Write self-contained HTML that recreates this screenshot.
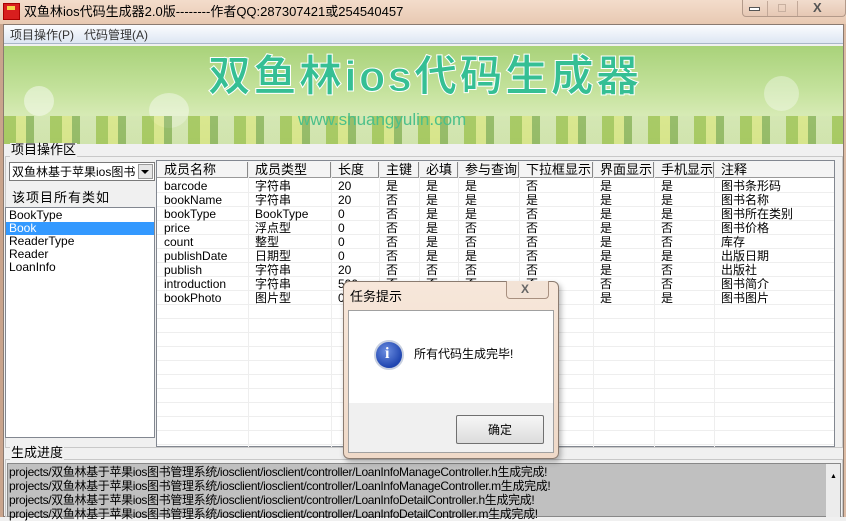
<!DOCTYPE html>
<html><head><meta charset="utf-8"><style>
*{margin:0;padding:0;box-sizing:border-box}
body{width:846px;height:517px;overflow:hidden;position:relative;background:#f0f0f0;font-family:"Liberation Sans","Noto Sans CJK SC",sans-serif;font-size:12px;color:#000}
.a{position:absolute}
.t{position:absolute;white-space:nowrap;line-height:14px;font-size:12px}
</style></head><body>
<div class="a" style="left:0;top:0;width:846px;height:517px;background:linear-gradient(90deg,#c9a48c,#e9cdb6 20%,#f0d8c4 50%,#e8cdb8 80%,#dcbba4)"></div>
<div class="a" style="left:0;top:0;width:846px;height:24px;background:linear-gradient(#f3dccb,#e8c9b2)"></div>
<div class="a" style="left:3px;top:3px;width:17px;height:17px;background:#d81e1e;border:1px solid #a00"></div>
<div class="a" style="left:7px;top:6px;width:8px;height:4px;background:#f6d24a"></div>
<div class="t" style="left:24px;top:4px;font-size:13px;line-height:15px">双鱼林ios代码生成器2.0版--------作者QQ:287307421或254540457</div>
<div class="a" style="left:742px;top:0;width:104px;height:17px;border:1px solid #b39a8a;border-top:none;border-radius:0 0 4px 4px;background:linear-gradient(#f1dccd,#e6c8b4)"></div>
<div class="a" style="left:767px;top:1px;width:1px;height:15px;background:#c2a898"></div>
<div class="a" style="left:797px;top:1px;width:1px;height:15px;background:#c2a898"></div>
<div class="a" style="left:749px;top:7px;width:11px;height:4px;border:1px solid #555;background:#fff"></div>
<div class="a" style="left:778px;top:4px;width:8px;height:8px;border:1px solid #c8b0a0"></div>
<div class="t" style="left:813px;top:1px;font-size:13px;color:#555;font-weight:bold">X</div>
<div class="a" style="left:3px;top:24px;width:841px;height:493px;background:#f0f0f0;border:1px solid #8a7a70"></div>
<div class="a" style="left:4px;top:25px;width:839px;height:19px;background:linear-gradient(#fbfcfe,#dde6f3);border-bottom:1px solid #a9b7c9"></div>
<div class="t" style="left:10px;top:28px;color:#333">项目操作(P)&nbsp;&nbsp;&nbsp;代码管理(A)</div>
<div class="a" style="left:4px;top:46px;width:839px;height:98px;background:linear-gradient(#a9d27a,#c4e29c 45%,#d6eab4 70%,#cfe3a8);overflow:hidden">
 <div class="a" style="left:20px;top:40px;width:30px;height:30px;border-radius:50%;background:rgba(255,255,255,.45)"></div>
 <div class="a" style="left:145px;top:47px;width:40px;height:35px;border-radius:50%;background:rgba(255,255,255,.4)"></div>
 <div class="a" style="left:760px;top:30px;width:35px;height:35px;border-radius:50%;background:rgba(255,255,255,.35)"></div>
 <div class="a" style="left:0;top:70px;width:839px;height:28px;background:repeating-linear-gradient(90deg,rgba(150,190,70,.7) 0 12px,rgba(220,230,120,.6) 12px 22px,rgba(110,160,60,.6) 22px 30px,rgba(210,228,180,.4) 30px 46px)"></div>
</div>
<div class="t" style="left:208px;top:52px;font-size:43px;line-height:50px;font-weight:bold;color:#35bf94;-webkit-text-stroke:1px #fff;letter-spacing:2.5px">双鱼林ios代码生成器</div>
<div class="t" style="left:298px;top:110px;font-size:17px;line-height:20px;color:#4cc08a">www.shuangyulin.com</div>
<div class="a" style="left:5px;top:156px;width:838px;height:292px;border:1px solid #c8c8c8"></div>
<div class="t" style="left:10px;top:143px;background:#f0f0f0;font-size:13px;padding:0 1px">项目操作区</div>
<div class="a" style="left:9px;top:162px;width:146px;height:19px;border:1px solid #7a7a7a;background:#fff"></div>
<div class="t" style="left:12px;top:165px">双鱼林基于苹果ios图书</div>
<div class="a" style="left:138px;top:164px;width:15px;height:15px;background:#e6e6e6;border:1px solid #999"></div>
<div class="a" style="left:141px;top:170px;border:4px solid transparent;border-top:4px solid #000;border-bottom:none"></div>
<div class="t" style="left:12px;top:190px;font-size:13px;line-height:16px;letter-spacing:1px">该项目所有类如</div>
<div class="a" style="left:5px;top:207px;width:150px;height:231px;background:#fff;border:1px solid #828790"></div>
<div class="a" style="left:6px;top:222px;width:148px;height:13px;background:#3399ff"></div>
<div class="t" style="left:9px;top:209px;line-height:13px">BookType<br><span style="color:#fff">Book</span><br>ReaderType<br>Reader<br>LoanInfo</div>
<div class="a" style="left:156px;top:160px;width:679px;height:287px;background:#fff;border:1px solid #828790"></div>
<div class="a" style="left:157px;top:161px;width:677px;height:17px;background:#f4f4f4;border-bottom:1px solid #999"></div>
<div id="tb"></div>
<div class="a" style="left:5px;top:459px;width:838px;height:58px;border:1px solid #c8c8c8"></div>
<div class="t" style="left:10px;top:446px;background:#f0f0f0;font-size:13px;padding:0 1px">生成进度</div>
<div class="a" style="left:7px;top:463px;width:834px;height:54px;background:#c0c0c0;border:1px solid #888"></div>
<div class="a" style="left:826px;top:464px;width:14px;height:53px;background:#ececec"></div>
<div class="t" style="left:830px;top:470px;font-size:7px">▲</div>
<div class="t" style="left:9px;top:465px;line-height:14px;font-size:12px;letter-spacing:-0.35px">projects/双鱼林基于苹果ios图书管理系统/iosclient/iosclient/controller/LoanInfoManageController.h生成完成!<br>projects/双鱼林基于苹果ios图书管理系统/iosclient/iosclient/controller/LoanInfoManageController.m生成完成!<br>projects/双鱼林基于苹果ios图书管理系统/iosclient/iosclient/controller/LoanInfoDetailController.h生成完成!<br>projects/双鱼林基于苹果ios图书管理系统/iosclient/iosclient/controller/LoanInfoDetailController.m生成完成!</div>
<div class="a" style="left:343px;top:281px;width:216px;height:178px;border:1px solid #8a7b70;border-radius:6px;background:linear-gradient(#f7e7da,#efd9c8);box-shadow:2px 3px 6px rgba(0,0,0,.3)"></div>
<div class="t" style="left:350px;top:289px;font-size:13px;line-height:16px">任务提示</div>
<div class="a" style="left:506px;top:281px;width:43px;height:18px;border:1px solid #a89080;border-top:none;border-radius:0 0 4px 4px;background:#f3e3d6"></div>
<div class="t" style="left:521px;top:282px;font-size:12px;color:#666;font-weight:bold">X</div>
<div class="a" style="left:348px;top:310px;width:206px;height:143px;background:#f0f0f0;border:1px solid #a0a0a0"></div>
<div class="a" style="left:349px;top:311px;width:204px;height:92px;background:#fff"></div>
<div class="a" style="left:374px;top:340px;width:30px;height:30px;border-radius:50%;background:radial-gradient(circle at 40% 35%,#6c8ee0,#1f45b0 70%);border:2px solid #c8d0e0"></div>
<div class="t" style="left:385px;top:344px;color:#fff;font-weight:bold;font-size:16px;line-height:20px;font-family:'Liberation Serif',serif">i</div>
<div class="t" style="left:414px;top:347px;font-size:12px">所有代码生成完毕!</div>
<div class="a" style="left:456px;top:415px;width:88px;height:29px;border:1px solid #707070;border-radius:2px;background:linear-gradient(#f6f6f6,#dcdcdc)"></div>
<div class="t" style="left:488px;top:423px">确定</div>
<script>
var cols=[157,248,331,379,419,458,519,593,654,714,833];
var hd=["成员名称","成员类型","长度","主键","必填","参与查询","下拉框显示","界面显示","手机显示","注释"];
var rows=[
["barcode","字符串","20","是","是","是","否","是","是","图书条形码"],
["bookName","字符串","20","否","是","是","是","是","是","图书名称"],
["bookType","BookType","0","否","是","是","否","是","是","图书所在类别"],
["price","浮点型","0","否","是","否","否","是","否","图书价格"],
["count","整型","0","否","是","否","否","是","否","库存"],
["publishDate","日期型","0","否","是","是","否","是","是","出版日期"],
["publish","字符串","20","否","否","否","否","是","否","出版社"],
["introduction","字符串","500","否","否","否","否","否","否","图书简介"],
["bookPhoto","图片型","0","否","否","否","否","是","是","图书图片"]];
var h="";
for(var i=0;i<10;i++){
 h+='<div class="t" style="left:'+(cols[i]+7)+'px;top:163px;font-size:13px">'+hd[i]+'</div>';
 if(i>0)h+='<div class="a" style="left:'+cols[i]+'px;top:161px;width:1px;height:286px;background:#eee"></div><div class="a" style="left:'+(cols[i]-1)+'px;top:162px;width:1px;height:15px;background:#888"></div>';
}
for(var r=0;r<19;r++)h+='<div class="a" style="left:157px;top:'+(192+r*14)+'px;width:677px;height:1px;background:#eee"></div>';
for(var r=0;r<rows.length;r++)for(var c=0;c<10;c++)
 h+='<div class="t" style="left:'+(cols[c]+7)+'px;top:'+(179+r*14)+'px">'+rows[r][c]+'</div>';
document.getElementById("tb").outerHTML=h;
</script>
</body></html>
